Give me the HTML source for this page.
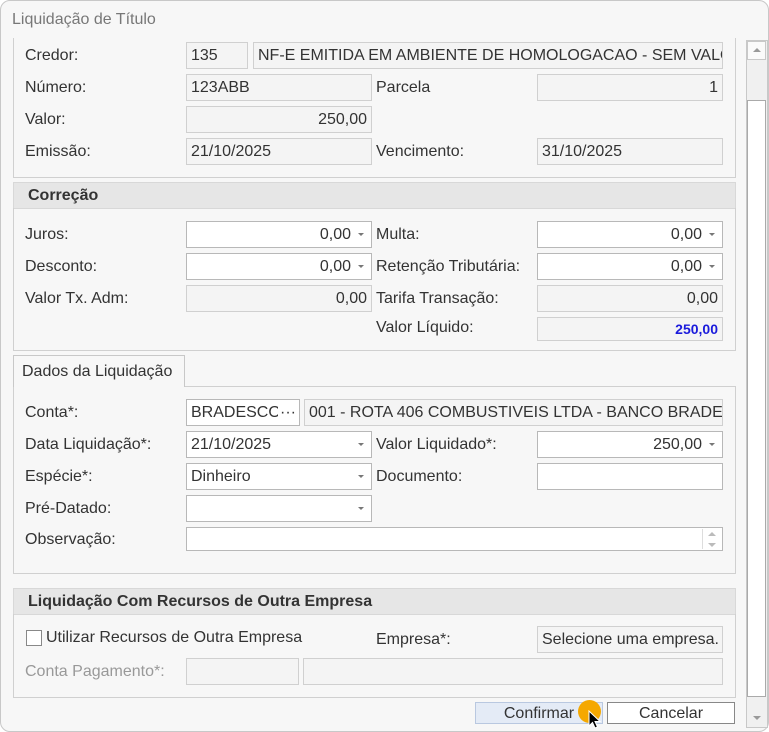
<!DOCTYPE html>
<html><head><meta charset="utf-8"><style>
*{box-sizing:border-box;margin:0;padding:0}
body{width:769px;height:732px;background:#fff;font-family:"Liberation Sans",sans-serif;font-size:16px;color:#333;position:relative;overflow:hidden}
.win{position:absolute;left:0;top:0;width:769px;height:732px;background:#f7f7f7;border-radius:10px}
.frame{position:absolute;left:0;top:0;width:769px;height:732px;border:1px solid #c8c8c8;border-radius:10px}
.a{position:absolute}
.l{position:absolute;line-height:20px;white-space:nowrap}
.i{position:absolute;height:27px;border:1px solid #d0d0d0;background:#f4f4f4;padding:0 4px;line-height:25px;white-space:nowrap;overflow:hidden}
.w{background:#fff;border-color:#b8b8b8}
.r{text-align:right;padding-right:20px}
.r2{text-align:right}
.dd:after{content:"";position:absolute;right:7px;top:11px;border-left:3px solid transparent;border-right:3px solid transparent;border-top:3px solid #777}
.panel{position:absolute;border:1px solid #d0d0d0;border-top:none}
.hdr{position:absolute;background:#e6e6e6;border:1px solid #d8d8d8;font-weight:bold;padding-left:14px;line-height:25px;color:#333}
</style></head><body>
<div class="win">
<div class="frame"></div>
<div class="l" style="left:12px;top:10px;color:#777">Liquidação de Título</div>

<!-- scrollbar -->
<div class="a" style="left:746px;top:40px;width:22px;height:688px;background:#f0f0f0;border:1px solid #c8c8c8"></div>
<div class="a" style="left:747px;top:41px;width:19px;height:19px;background:#fafafa;border:1px solid #c8c8c8"></div>
<div class="a" style="left:753px;top:48px;border-left:4px solid transparent;border-right:4px solid transparent;border-bottom:4px solid #999"></div>
<div class="a" style="left:747px;top:100px;width:19px;height:597px;background:#fff;border:1px solid #aaa"></div>
<div class="a" style="left:753px;top:716px;border-left:4px solid transparent;border-right:4px solid transparent;border-top:4px solid #999"></div>

<!-- section 1 -->
<div class="panel" style="left:13px;top:38px;width:723px;height:140px"></div>
<div class="l" style="left:25px;top:46px">Credor:</div>
<div class="i" style="left:186px;top:42px;width:62px">135</div>
<div class="i" style="left:253px;top:42px;width:470px">NF-E EMITIDA EM AMBIENTE DE HOMOLOGACAO - SEM VALOR</div>
<div class="l" style="left:25px;top:78px">Número:</div>
<div class="i" style="left:186px;top:74px;width:186px">123ABB</div>
<div class="l" style="left:376px;top:78px">Parcela</div>
<div class="i r2" style="left:537px;top:74px;width:186px">1</div>
<div class="l" style="left:25px;top:110px">Valor:</div>
<div class="i r2" style="left:186px;top:106px;width:186px">250,00</div>
<div class="l" style="left:25px;top:142px">Emissão:</div>
<div class="i" style="left:186px;top:138px;width:186px">21/10/2025</div>
<div class="l" style="left:376px;top:142px">Vencimento:</div>
<div class="i" style="left:537px;top:138px;width:186px">31/10/2025</div>

<!-- Correção -->
<div class="hdr" style="left:13px;top:182px;width:723px;height:27px">Correção</div>
<div class="panel" style="left:13px;top:208px;width:723px;height:143px"></div>
<div class="l" style="left:25px;top:225px">Juros:</div>
<div class="i w r dd" style="left:186px;top:221px;width:186px">0,00</div>
<div class="l" style="left:376px;top:225px">Multa:</div>
<div class="i w r dd" style="left:537px;top:221px;width:186px">0,00</div>
<div class="l" style="left:25px;top:257px">Desconto:</div>
<div class="i w r dd" style="left:186px;top:253px;width:186px">0,00</div>
<div class="l" style="left:376px;top:257px">Retenção Tributária:</div>
<div class="i w r dd" style="left:537px;top:253px;width:186px">0,00</div>
<div class="l" style="left:25px;top:289px">Valor Tx. Adm:</div>
<div class="i r2" style="left:186px;top:285px;width:186px">0,00</div>
<div class="l" style="left:376px;top:289px">Tarifa Transação:</div>
<div class="i r2" style="left:537px;top:285px;width:186px">0,00</div>
<div class="l" style="left:376px;top:318px">Valor Líquido:</div>
<div class="i r2" style="left:537px;top:317px;width:186px;height:24px;line-height:22px;color:#1a1adc;font-weight:bold;font-size:14px">250,00</div>

<!-- Dados da liquidação -->
<div class="a" style="left:13px;top:386px;width:723px;height:188px;border:1px solid #d0d0d0"></div>
<div class="a" style="left:13px;top:355px;width:172px;height:32px;border:1px solid #c8c8c8;border-bottom:none;background:#f7f7f7;padding-left:8px;line-height:32px">Dados da Liquidação</div>
<div class="l" style="left:25px;top:403px">Conta*:</div>
<div class="i w" style="left:186px;top:399px;width:114px">BRADESCO<span style="position:absolute;right:3px;top:0;background:#fff;padding-left:2px">···</span></div>
<div class="i" style="left:304px;top:399px;width:419px">001 - ROTA 406 COMBUSTIVEIS LTDA - BANCO BRADESCO</div>
<div class="l" style="left:25px;top:435px">Data Liquidação*:</div>
<div class="i w dd" style="left:186px;top:431px;width:186px">21/10/2025</div>
<div class="l" style="left:376px;top:435px">Valor Liquidado*:</div>
<div class="i w r dd" style="left:537px;top:431px;width:186px">250,00</div>
<div class="l" style="left:25px;top:467px">Espécie*:</div>
<div class="i w dd" style="left:186px;top:463px;width:186px">Dinheiro</div>
<div class="l" style="left:376px;top:467px">Documento:</div>
<div class="i w" style="left:537px;top:463px;width:186px"></div>
<div class="l" style="left:25px;top:499px">Pré-Datado:</div>
<div class="i w dd" style="left:186px;top:495px;width:186px"></div>
<div class="l" style="left:25px;top:530px">Observação:</div>
<div class="i w" style="left:186px;top:527px;width:537px;height:24px"></div>
<div class="a" style="left:702px;top:529px;width:19px;height:20px;border-left:1px solid #ddd"></div>
<div class="a" style="left:708px;top:532px;border-left:4px solid transparent;border-right:4px solid transparent;border-bottom:4px solid #bbb"></div>
<div class="a" style="left:708px;top:543px;border-left:4px solid transparent;border-right:4px solid transparent;border-top:4px solid #bbb"></div>

<!-- outra empresa -->
<div class="hdr" style="left:13px;top:588px;width:723px;height:27px">Liquidação Com Recursos de Outra Empresa</div>
<div class="panel" style="left:13px;top:614px;width:723px;height:84px"></div>
<div class="a" style="left:26px;top:630px;width:16px;height:16px;border:1px solid #888;background:#fff"></div>
<div class="l" style="left:46px;top:628px">Utilizar Recursos de Outra Empresa</div>
<div class="l" style="left:376px;top:630px">Empresa*:</div>
<div class="i" style="left:537px;top:626px;width:186px">Selecione uma empresa.</div>
<div class="l" style="left:25px;top:662px;color:#999">Conta Pagamento*:</div>
<div class="i" style="left:186px;top:658px;width:113px"></div>
<div class="i" style="left:303px;top:658px;width:420px"></div>

<!-- buttons -->
<div class="a" style="left:475px;top:702px;width:128px;height:22px;background:#e4ebf6;border:1px solid #b9c8e0;text-align:center;line-height:22px">Confirmar</div>
<div class="a" style="left:607px;top:702px;width:128px;height:22px;background:#fff;border:1px solid #888;text-align:center;line-height:22px">Cancelar</div>
<div class="a" style="left:578px;top:700px;width:23px;height:23px;border-radius:50%;background:#f5a800"></div>
<svg class="a" style="left:588px;top:710px" width="14" height="20" viewBox="0 0 14 20"><path d="M1 1 L1 16 L4.5 12.5 L7 18 L9.5 17 L7 11.5 L12 11.5 Z" fill="#000" stroke="#fff" stroke-width="1"/></svg>
</div>
</body></html>
